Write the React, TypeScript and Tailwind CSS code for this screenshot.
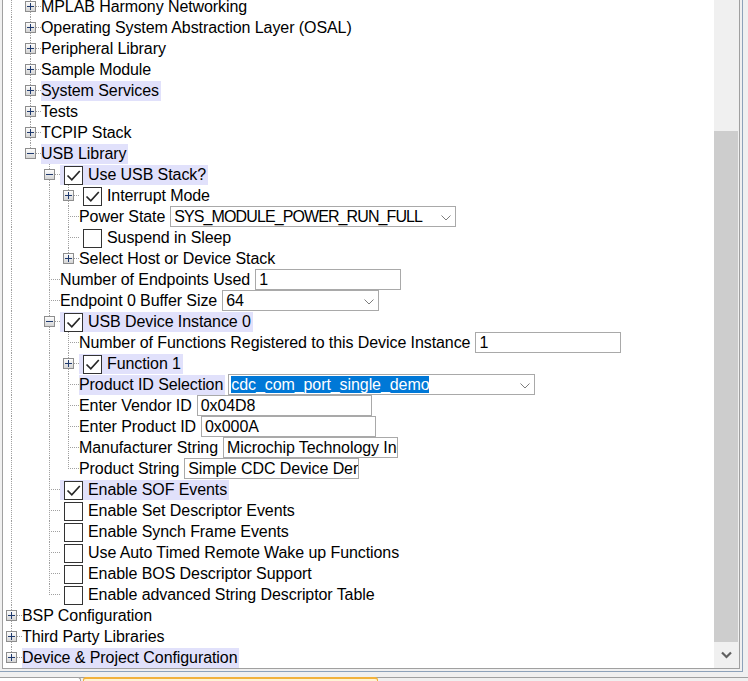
import React from 'react';

type Field = { kind: 'input' | 'select'; value: string; w: string; selected?: boolean; tight?: boolean };
type TNode = {
  label: string;
  expander?: 'plus' | 'minus';
  checkbox?: boolean;
  highlight?: boolean;
  field?: Field;
  children?: TNode[];
};

const W175 = 'w-[175px]';

const hidden: TNode = {
  label: '',
  expander: 'minus',
  children: [
    { label: 'MPLAB Harmony Networking', expander: 'plus' },
    { label: 'Operating System Abstraction Layer (OSAL)', expander: 'plus' },
    { label: 'Peripheral Library', expander: 'plus' },
    { label: 'Sample Module', expander: 'plus' },
    { label: 'System Services', expander: 'plus', highlight: true },
    { label: 'Tests', expander: 'plus' },
    { label: 'TCPIP Stack', expander: 'plus' },
    {
      label: 'USB Library',
      expander: 'minus',
      highlight: true,
      children: [
        {
          label: 'Use USB Stack?',
          expander: 'minus',
          checkbox: true,
          highlight: true,
          children: [
            { label: 'Interrupt Mode', expander: 'plus', checkbox: true },
            {
              label: 'Power State',
              field: { kind: 'select', value: 'SYS_MODULE_POWER_RUN_FULL', w: 'w-[286px]', tight: true },
            },
            { label: 'Suspend in Sleep', checkbox: false },
            { label: 'Select Host or Device Stack', expander: 'plus' },
          ],
        },
        { label: 'Number of Endpoints Used', field: { kind: 'input', value: '1', w: 'w-[146px]' } },
        { label: 'Endpoint 0 Buffer Size', field: { kind: 'select', value: '64', w: 'w-[157px]' } },
        {
          label: 'USB Device Instance 0',
          expander: 'minus',
          checkbox: true,
          highlight: true,
          children: [
            {
              label: 'Number of Functions Registered to this Device Instance',
              field: { kind: 'input', value: '1', w: 'w-[146px]' },
            },
            { label: 'Function 1', expander: 'plus', checkbox: true, highlight: true },
            {
              label: 'Product ID Selection',
              highlight: true,
              field: { kind: 'select', value: 'cdc_com_port_single_demo', w: 'w-[307px]', selected: true },
            },
            { label: 'Enter Vendor ID', field: { kind: 'input', value: '0x04D8', w: W175 } },
            { label: 'Enter Product ID', field: { kind: 'input', value: '0x000A', w: W175 } },
            { label: 'Manufacturer String', field: { kind: 'input', value: 'Microchip Technology Inc.', w: W175 } },
            { label: 'Product String', field: { kind: 'input', value: 'Simple CDC Device Demo', w: W175 } },
          ],
        },
        { label: 'Enable SOF Events', checkbox: true, highlight: true },
        { label: 'Enable Set Descriptor Events', checkbox: false },
        { label: 'Enable Synch Frame Events', checkbox: false },
        { label: 'Use Auto Timed Remote Wake up Functions', checkbox: false },
        { label: 'Enable BOS Descriptor Support', checkbox: false },
        { label: 'Enable advanced String Descriptor Table', checkbox: false },
      ],
    },
  ],
};

const roots: TNode[] = [
  hidden,
  { label: 'BSP Configuration', expander: 'plus' },
  { label: 'Third Party Libraries', expander: 'plus' },
  { label: 'Device & Project Configuration', expander: 'plus', highlight: true },
];

type Row = { node: TNode; depth: number; guides: boolean[]; last: boolean };

function flatten(nodes: TNode[], depth: number, guides: boolean[], out: Row[]) {
  nodes.forEach((n, i) => {
    const last = i === nodes.length - 1;
    if (n.label) out.push({ node: n, depth, guides, last });
    if (n.children) flatten(n.children, depth + 1, [...guides, !last], out);
  });
}

const rows: Row[] = [];
flatten(roots, 0, [], rows);

function Expander({ open }: { open: boolean }) {
  return (
    <svg width="11" height="11" viewBox="0 0 11 11" className="absolute left-[3px] top-[5px]">
      <defs>
        <linearGradient id="expg" x1="0" y1="0" x2="0" y2="1">
          <stop offset="0" stopColor="#ffffff" />
          <stop offset="1" stopColor="#d2d2d2" />
        </linearGradient>
      </defs>
      <rect x="0.5" y="0.5" width="10" height="10" fill="url(#expg)" stroke="#8e8e8e" />
      <path d="M2 5.5 H9" stroke="#1f3a6e" strokeWidth="1" />
      {!open && <path d="M5.5 2 V9" stroke="#1f3a6e" strokeWidth="1" />}
    </svg>
  );
}

function Checkbox({ checked }: { checked: boolean }) {
  return (
    <svg width="19" height="19" viewBox="0 0 19 19" className="ml-[4px] mr-[5px] shrink-0">
      <rect x="0.5" y="0.5" width="18" height="18" fill="#ffffff" stroke="#333333" />
      {checked && <path d="M3.5 9.5 L7.8 13.8 L15.8 5" fill="none" stroke="#262626" strokeWidth="1.7" />}
    </svg>
  );
}

function Chevron() {
  return (
    <svg width="10" height="6" viewBox="0 0 10 6" className="absolute right-[4px] top-[8px]">
      <path d="M0.5 0.5 L5 5 L9.5 0.5" fill="none" stroke="#7d7d7d" strokeWidth="1" />
    </svg>
  );
}

function FieldBox({ f }: { f: Field }) {
  return (
    <div
      className={`relative ml-[3px] flex h-[21px] shrink-0 items-center overflow-hidden whitespace-nowrap border border-[#a9a9a9] bg-white ${f.w} ${
        f.selected ? 'pl-[2px]' : 'pl-[3px]'
      }`}
    >
      {f.selected ? (
        <span className="bg-[#0078d7] leading-[17px] text-white">{f.value}</span>
      ) : (
        <span className={f.tight ? 'tracking-[-0.9px]' : ''}>{f.value}</span>
      )}
      {f.kind === 'select' && <Chevron />}
    </div>
  );
}

function TreeRow({ row }: { row: Row }) {
  const { node, guides, last } = row;
  return (
    <div className="flex h-[21px] shrink-0 items-center">
      {guides.map((g, d) => (
        <div key={d} className="relative h-full w-[19px] shrink-0">
          {g && <div className="absolute left-[8px] top-0 h-full border-l border-dotted border-[#a0a0a0]" />}
        </div>
      ))}
      <div className="relative h-full w-[19px] shrink-0">
        <div
          className={`absolute left-[8px] top-0 border-l border-dotted border-[#a0a0a0] ${
            last ? 'h-[11px]' : 'h-full'
          }`}
        />
        <div className="absolute left-[8px] top-[10px] w-[11px] border-t border-dotted border-[#a0a0a0]" />
        {node.expander && <Expander open={node.expander === 'minus'} />}
      </div>
      <div
        className={`flex h-[20px] shrink-0 items-center self-end whitespace-nowrap pr-[2px] ${
          node.highlight ? 'bg-[#e1e1fb]' : ''
        }`}
      >
        {node.checkbox !== undefined && <Checkbox checked={node.checkbox} />}
        <span>{node.label}</span>
      </div>
      {node.field && <FieldBox f={node.field} />}
    </div>
  );
}

export default function App() {
  return (
    <div className="h-[681px] w-[748px] overflow-hidden bg-[#f0f0f0] font-['Liberation_Sans',Arial,sans-serif] text-[16px] tracking-[-0.08px] text-black">
      <div className="h-[672px] w-[743px] border-b border-r border-[#8da2ba] pb-[2px] pl-[2px] pr-[2px]">
        <div className="flex h-[669px] w-[738px] border-b border-l border-r border-[#a0a0a0] bg-white">
          <div className="min-w-0 flex-1 overflow-hidden bg-white">
            <div className="-mt-[4px] flex flex-col">
              {rows.map((r, i) => (
                <TreeRow key={i} row={r} />
              ))}
            </div>
          </div>
          <div className="flex w-[25px] shrink-0 flex-col bg-[#f0f0f0]">
            <div className="h-[131px] w-[24px]" />
            <div className="h-[511px] w-[24px] bg-[#cdcdcd]" />
            <div className="flex h-[26px] w-[24px] items-center justify-center">
              <svg width="11" height="8" viewBox="0 0 11 8">
                <path d="M1 1.5 L5.5 6 L10 1.5" fill="none" stroke="#606060" strokeWidth="2.2" />
              </svg>
            </div>
          </div>
        </div>
      </div>
      <div className="mt-[5px] flex h-[4px] items-start border-t border-[#a0a0a0]">
        <div className="-mt-px h-[5px] w-[81px] rounded-tr-[3px] border-r border-t border-[#a0a0a0] bg-white" />
        <div className="-mt-px ml-[2px] h-[5px] w-[295px] rounded-t-[3px] border-x border-t-2 border-[#f2b23c] bg-[#fff4d4]" />
      </div>
    </div>
  );
}
